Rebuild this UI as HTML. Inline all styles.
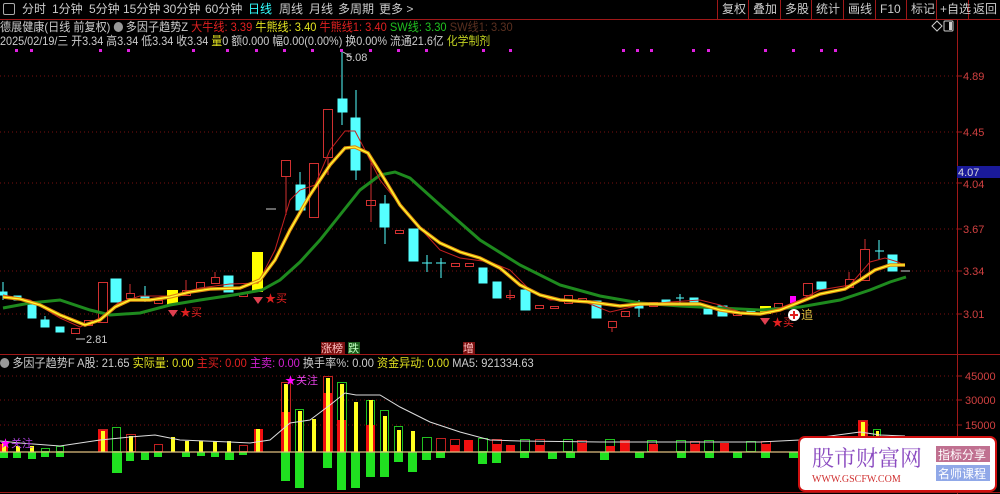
<!DOCTYPE html>
<html><head><meta charset="utf-8"><style>
html,body{margin:0;padding:0;background:#000;width:1000px;height:494px;overflow:hidden;font-family:"Liberation Sans","Noto Sans CJK SC",sans-serif;}
.t{position:absolute;white-space:nowrap;font-size:12px;line-height:14px;}
.sx{transform-origin:0 0;}
.m span{position:absolute;top:0}
</style></head><body>
<div style="position:relative;width:1000px;height:494px;">
<!-- top bar -->
<div class="t" style="left:3px;top:3px;width:10px;height:10px;border:1px solid #aaa;border-radius:2px;"></div>
<div class="t m" style="left:0;top:2px;color:#ccc;"><span style="left:22px">分时</span><span style="left:52px">1分钟</span><span style="left:89px">5分钟</span><span style="left:123px">15分钟</span><span style="left:163px">30分钟</span><span style="left:205px">60分钟</span><span style="left:248px;color:#3ff">日线</span><span style="left:279px">周线</span><span style="left:309px">月线</span><span style="left:338px">多周期</span><span style="left:379px">更多 &gt;</span></div>
<svg width="1000" height="494" style="position:absolute;left:0;top:0" xmlns="http://www.w3.org/2000/svg">
<line x1="0" y1="19.5" x2="1000" y2="19.5" stroke="#a01818"/>
<g stroke="#a01818"><line x1="717.5" y1="0" x2="717.5" y2="19"/><line x1="748.5" y1="0" x2="748.5" y2="19"/><line x1="780.5" y1="0" x2="780.5" y2="19"/><line x1="811.5" y1="0" x2="811.5" y2="19"/><line x1="843.5" y1="0" x2="843.5" y2="19"/><line x1="875.5" y1="0" x2="875.5" y2="19"/><line x1="906.5" y1="0" x2="906.5" y2="19"/><line x1="936.5" y1="0" x2="936.5" y2="19"/><line x1="968.5" y1="0" x2="968.5" y2="19"/>
<line x1="957.5" y1="19" x2="957.5" y2="494"/>
<line x1="0" y1="354.5" x2="1000" y2="354.5"/>
<line x1="0" y1="492.5" x2="1000" y2="492.5"/></g>
<g stroke="#7a1010" stroke-dasharray="1,3">
<line x1="0" y1="76" x2="957" y2="76"/><line x1="0" y1="132" x2="957" y2="132"/><line x1="0" y1="183" x2="957" y2="183"/><line x1="0" y1="229" x2="957" y2="229"/><line x1="0" y1="271" x2="957" y2="271"/><line x1="0" y1="314" x2="957" y2="314"/>
<line x1="0" y1="376" x2="957" y2="376"/><line x1="0" y1="400" x2="957" y2="400"/><line x1="0" y1="425" x2="957" y2="425"/></g>
<g stroke="#a01818"><line x1="957" y1="76" x2="962" y2="76"/><line x1="957" y1="132" x2="962" y2="132"/><line x1="957" y1="183" x2="962" y2="183"/><line x1="957" y1="229" x2="962" y2="229"/><line x1="957" y1="271" x2="962" y2="271"/><line x1="957" y1="314" x2="962" y2="314"/><line x1="957" y1="376" x2="962" y2="376"/><line x1="957" y1="400" x2="962" y2="400"/><line x1="957" y1="425" x2="962" y2="425"/></g>
<!-- magenta dots -->
<g fill="#e020e0">
<rect x="15" y="49" width="3" height="3"/><rect x="30" y="49" width="3" height="3"/><rect x="99" y="49" width="3" height="3"/><rect x="127" y="49" width="3" height="3"/><rect x="192" y="49" width="3" height="3"/><rect x="226" y="49" width="3" height="3"/><rect x="255" y="49" width="3" height="3"/><rect x="283" y="49" width="3" height="3"/><rect x="311" y="49" width="3" height="3"/><rect x="340" y="49" width="3" height="3"/><rect x="369" y="49" width="3" height="3"/><rect x="397" y="49" width="3" height="3"/><rect x="425" y="49" width="3" height="3"/><rect x="482" y="49" width="3" height="3"/><rect x="509" y="49" width="3" height="3"/><rect x="622" y="49" width="3" height="3"/><rect x="636" y="49" width="3" height="3"/><rect x="650" y="49" width="3" height="3"/><rect x="692" y="49" width="3" height="3"/><rect x="707" y="49" width="3" height="3"/><rect x="764" y="49" width="3" height="3"/><rect x="792" y="49" width="3" height="3"/><rect x="820" y="49" width="3" height="3"/><rect x="834" y="49" width="3" height="3"/></g>
<!-- candles: cyan -->
<g fill="#5ff" stroke="#5ff">
<line x1="3" y1="282" x2="3" y2="300"/><rect x="0" y="292" width="7" height="3"/>
<rect x="14" y="296" width="7" height="4"/>
<rect x="28" y="305" width="8" height="13"/><line x1="45" y1="316" x2="45" y2="322"/><rect x="41" y="320" width="8" height="7"/>
<rect x="56" y="327" width="8" height="5"/>
<rect x="111" y="279" width="10" height="23"/><rect x="141" y="296" width="8" height="4"/><line x1="145" y1="286" x2="145" y2="302"/>
<rect x="224" y="276" width="9" height="16"/>
<rect x="296" y="185" width="9" height="25"/><line x1="300" y1="172" x2="300" y2="212"/>
<line x1="342" y1="52" x2="342" y2="125"/><rect x="338" y="99" width="9" height="13"/>
<line x1="356" y1="90" x2="356" y2="180"/><rect x="351" y="118" width="9" height="52"/>
<line x1="385" y1="195" x2="385" y2="244"/><rect x="380" y="204" width="9" height="23"/>
<rect x="409" y="229" width="9" height="32"/>
<line x1="422" y1="263" x2="432" y2="263"/><line x1="427" y1="255" x2="427" y2="272"/>
<line x1="436" y1="263" x2="446" y2="263"/><line x1="441" y1="258" x2="441" y2="278"/>
<rect x="479" y="268" width="8" height="15"/><rect x="493" y="282" width="8" height="16"/>
<rect x="521" y="290" width="9" height="20"/><rect x="592" y="301" width="9" height="17"/>
<rect x="635" y="305" width="8" height="3"/><line x1="639" y1="300" x2="639" y2="317"/>
<rect x="662" y="300" width="8" height="2"/><line x1="676" y1="298" x2="684" y2="298"/><line x1="680" y1="294" x2="680" y2="303"/>
<rect x="690" y="298" width="8" height="5"/><rect x="704" y="308" width="8" height="6"/><rect x="718" y="306" width="9" height="10"/><rect x="747" y="309" width="8" height="4"/>
<rect x="817" y="282" width="9" height="7"/><line x1="875" y1="251" x2="884" y2="251"/><line x1="879" y1="240" x2="879" y2="260"/>
<rect x="888" y="255" width="9" height="16"/></g>
<!-- candles red hollow/solid -->
<g fill="none" stroke="#d03030">
<rect x="71.5" y="328.5" width="8" height="5"/><rect x="84.5" y="320.5" width="8" height="5"/>
<rect x="98.5" y="282.5" width="9" height="40"/><rect x="126.5" y="293.5" width="8" height="5"/><line x1="130" y1="284" x2="130" y2="293"/>
<rect x="154.5" y="300.5" width="8" height="3"/><rect x="182.5" y="290.5" width="8" height="5"/><line x1="186" y1="280" x2="186" y2="290"/>
<rect x="196.5" y="282.5" width="8" height="8"/><rect x="211.5" y="277.5" width="8" height="6"/><line x1="215" y1="272" x2="215" y2="277"/>
<rect x="239.5" y="293.5" width="8" height="3"/>
<rect x="281.5" y="160.5" width="9" height="16"/><line x1="286" y1="176" x2="286" y2="215"/>
<rect x="309.5" y="163.5" width="9" height="54"/>
<rect x="323.5" y="109.5" width="9" height="48"/><line x1="328" y1="157" x2="328" y2="175"/>
<rect x="366.5" y="200.5" width="9" height="5"/><line x1="371" y1="160" x2="371" y2="222"/>
<rect x="395.5" y="230.5" width="8" height="3"/><rect x="451.5" y="263.5" width="8" height="3"/><rect x="465.5" y="263.5" width="8" height="3"/>
<rect x="506.5" y="295.5" width="8" height="2"/><line x1="510" y1="290" x2="510" y2="300"/>
<rect x="535.5" y="305.5" width="8" height="3"/><rect x="550.5" y="306.5" width="8" height="2"/>
<rect x="564.5" y="295.5" width="8" height="8"/><rect x="578.5" y="298.5" width="8" height="4"/>
<rect x="608.5" y="321.5" width="8" height="6"/><line x1="612" y1="327" x2="612" y2="332"/>
<rect x="621.5" y="311.5" width="8" height="5"/><rect x="649.5" y="302.5" width="8" height="4"/>
<rect x="733.5" y="313.5" width="8" height="2"/><rect x="774.5" y="303.5" width="8" height="4"/>
<rect x="803.5" y="283.5" width="9" height="12"/><rect x="845.5" y="279.5" width="8" height="8"/><line x1="849" y1="272" x2="849" y2="279"/>
<rect x="860.5" y="249.5" width="9" height="31"/><line x1="865" y1="239" x2="865" y2="249"/></g>
<g fill="#ffff00"><rect x="167" y="290" width="11" height="15"/><rect x="252" y="252" width="11" height="40"/><rect x="760" y="306" width="11" height="8"/></g>
<rect x="790" y="296" width="6" height="7" fill="#f0f"/>
<line x1="266" y1="209" x2="276" y2="209" stroke="#ccc"/><line x1="901" y1="271" x2="910" y2="271" stroke="#ccc"/>
<!-- lines -->
<polyline fill="none" stroke="#1e8a1e" stroke-width="3" points="3,308 30,303 60,300 90,310 110,315 140,313 170,305 200,300 240,294 262,290 280,280 300,262 320,240 340,215 360,190 380,175 395,172 410,178 440,205 480,240 520,265 560,285 600,296 640,303 680,306 720,308 760,310 800,307 840,300 870,290 890,282 906,277"/>
<polyline fill="none" stroke="#c42020" stroke-width="1" points="3,295 30,300 60,318 80,327 100,318 118,303 140,296 170,296 200,288 230,284 258,283 275,250 290,200 300,190 315,185 330,150 345,131 355,131 365,150 380,180 400,205 420,228 440,250 460,258 490,262 510,270 530,290 550,300 580,300 610,312 640,305 670,302 700,300 720,305 740,312 760,315 780,308 800,300 820,290 850,285 870,262 885,258 898,262 905,266"/>
<polyline fill="none" stroke="#e08a10" stroke-width="3.5" points="3,297 20,299 40,305 60,315 85,325 100,320 115,307 130,300 150,300 170,297 190,292 210,289 240,288 260,280 275,260 290,230 310,195 330,165 345,148 355,147 368,153 385,180 400,205 420,228 440,243 460,252 480,258 500,268 520,285 540,295 560,300 590,302 620,306 640,304 660,304 680,304 700,304 720,310 740,313 760,314 780,310 800,302 820,294 845,289 860,280 875,270 890,265 905,265"/>
<polyline fill="none" stroke="#ffff30" stroke-width="1.3" points="3,297 20,299 40,305 60,315 85,325 100,320 115,307 130,300 150,300 170,297 190,292 210,289 240,288 260,280 275,260 290,230 310,195 330,165 345,148 355,147 368,153 385,180 400,205 420,228 440,243 460,252 480,258 500,268 520,285 540,295 560,300 590,302 620,306 640,304 660,304 680,304 700,304 720,310 740,313 760,314 780,310 800,302 820,294 845,289 860,280 875,270 890,265 905,265"/>
<!-- markers -->
<g fill="#e04050"><path d="M168,310 h10 l-5,7z"/><path d="M253,297 h10 l-5,7z"/><path d="M760,318 h10 l-5,7z"/></g>
<g fill="#e02020" font-size="11"><text x="180" y="316">★买</text><text x="265" y="302">★买</text><text x="772" y="326">★买</text></g>
<circle cx="794" cy="315" r="6" fill="#fff"/><path d="M790,315h8M794,311v8" stroke="#e02020" stroke-width="2"/>
<text x="801" y="319" fill="#e0c040" font-size="12">追</text>
<text x="346" y="61" fill="#ccc" font-size="11">5.08</text><line x1="343" y1="52" x2="352" y2="57" stroke="#ccc"/>
<text x="86" y="343" fill="#ccc" font-size="11">2.81</text><line x1="76" y1="339" x2="85" y2="339" stroke="#ccc"/>
<!-- sub panel -->
<g fill="#20e020"><rect x="0" y="452" width="8" height="6"/><rect x="13" y="452" width="8" height="6"/><rect x="28" y="452" width="8" height="7"/><rect x="41" y="452" width="8" height="5"/><rect x="56" y="452" width="8" height="5"/><rect x="112" y="452" width="10" height="21"/><rect x="126" y="452" width="8" height="9"/><rect x="141" y="452" width="8" height="8"/><rect x="154" y="452" width="8" height="5"/><rect x="182" y="452" width="8" height="5"/><rect x="197" y="452" width="8" height="4"/><rect x="211" y="452" width="8" height="5"/><rect x="225" y="452" width="9" height="8"/><rect x="239" y="452" width="8" height="3"/>
<rect x="281" y="452" width="9" height="29"/><rect x="295" y="452" width="9" height="36"/><rect x="323" y="452" width="9" height="16"/><rect x="337" y="452" width="9" height="38"/><rect x="351" y="452" width="9" height="36"/><rect x="366" y="452" width="9" height="25"/><rect x="380" y="452" width="9" height="25"/><rect x="394" y="452" width="9" height="10"/><rect x="408" y="452" width="9" height="20"/>
<rect x="422" y="452" width="9" height="8"/><rect x="436" y="452" width="9" height="6"/><rect x="478" y="452" width="9" height="12"/><rect x="492" y="452" width="9" height="11"/><rect x="520" y="452" width="9" height="6"/><rect x="548" y="452" width="9" height="7"/><rect x="566" y="452" width="9" height="6"/><rect x="600" y="452" width="9" height="8"/><rect x="635" y="452" width="9" height="6"/><rect x="677" y="452" width="9" height="6"/><rect x="705" y="452" width="9" height="6"/><rect x="733" y="452" width="9" height="6"/><rect x="761" y="452" width="9" height="6"/><rect x="789" y="452" width="9" height="6"/></g>
<g stroke="#20c020" fill="none"><rect x="112.5" y="427.5" width="8" height="24"/><rect x="41.5" y="448.5" width="8" height="3"/><rect x="56.5" y="446.5" width="7" height="5"/><rect x="295.5" y="409.5" width="8" height="42"/><rect x="337.5" y="382.5" width="9" height="69"/><rect x="366.5" y="400.5" width="8" height="51"/><rect x="380.5" y="410.5" width="8" height="41"/><rect x="394.5" y="426.5" width="8" height="25"/><rect x="422.5" y="437.5" width="9" height="14"/><rect x="436.5" y="438.5" width="9" height="13"/><rect x="478.5" y="438.5" width="9" height="13"/><rect x="520.5" y="439.5" width="9" height="12"/><rect x="563.5" y="439.5" width="9" height="12"/><rect x="605.5" y="439.5" width="9" height="12"/><rect x="647.5" y="440.5" width="9" height="11"/><rect x="676.5" y="440.5" width="9" height="11"/><rect x="704.5" y="440.5" width="9" height="11"/><rect x="746.5" y="441.5" width="9" height="10"/><rect x="873.5" y="429.5" width="7" height="22"/></g>
<g stroke="#c02020" fill="none"><rect x="98.5" y="429.5" width="9" height="22"/><rect x="126.5" y="434.5" width="9" height="17"/><rect x="154.5" y="444.5" width="8" height="7"/><rect x="239.5" y="445.5" width="8" height="6"/><rect x="281.5" y="382.5" width="9" height="69"/><rect x="323.5" y="376.5" width="9" height="75"/><rect x="436.5" y="438.5" width="9" height="13"/><rect x="450.5" y="439.5" width="9" height="12"/><rect x="492.5" y="439.5" width="9" height="12"/><rect x="535.5" y="439.5" width="9" height="12"/><rect x="577.5" y="440.5" width="9" height="11"/><rect x="620.5" y="440.5" width="9" height="11"/><rect x="690.5" y="441.5" width="9" height="10"/><rect x="761.5" y="441.5" width="9" height="10"/><rect x="858.5" y="420.5" width="9" height="31"/></g>
<g fill="#f01010"><rect x="0" y="444" width="8" height="8"/><rect x="98" y="430" width="9" height="22"/><rect x="254" y="429" width="9" height="23"/><rect x="281" y="412" width="9" height="40"/><rect x="323" y="393" width="9" height="59"/><rect x="337" y="420" width="9" height="32"/><rect x="366" y="425" width="9" height="27"/><rect x="450" y="445" width="9" height="7"/><rect x="464" y="440" width="9" height="12"/><rect x="492" y="444" width="9" height="8"/><rect x="506" y="445" width="9" height="7"/><rect x="535" y="445" width="9" height="7"/><rect x="578" y="443" width="9" height="9"/><rect x="606" y="446" width="9" height="6"/><rect x="620" y="441" width="9" height="11"/><rect x="649" y="444" width="9" height="8"/><rect x="691" y="444" width="9" height="8"/><rect x="720" y="443" width="9" height="9"/><rect x="762" y="444" width="9" height="8"/><rect x="858" y="421" width="9" height="31"/></g>
<g fill="#ffff20"><rect x="2" y="443" width="4" height="9"/><rect x="16" y="446" width="4" height="6"/><rect x="30" y="446" width="4" height="6"/><rect x="101" y="431" width="4" height="21"/><rect x="129" y="436" width="4" height="16"/><rect x="171" y="437" width="4" height="15"/><rect x="185" y="441" width="4" height="11"/><rect x="199" y="441" width="4" height="11"/><rect x="213" y="441" width="4" height="11"/><rect x="227" y="441" width="4" height="11"/><rect x="256" y="429" width="4" height="23"/><rect x="284" y="384" width="4" height="68"/><rect x="298" y="411" width="4" height="41"/><rect x="312" y="419" width="4" height="33"/><rect x="326" y="378" width="4" height="74"/><rect x="340" y="384" width="4" height="68"/><rect x="354" y="402" width="4" height="50"/><rect x="369" y="400" width="4" height="52"/><rect x="383" y="416" width="4" height="36"/><rect x="397" y="430" width="4" height="22"/><rect x="411" y="431" width="4" height="21"/><rect x="861" y="422" width="4" height="30"/><rect x="876" y="431" width="3" height="21"/></g>
<line x1="0" y1="452" x2="957" y2="452" stroke="#e0c080" stroke-width="1.2"/>
<polyline fill="none" stroke="#ddd" points="0,441 20,443 60,446 100,440 130,437 155,435 180,440 230,442 250,443 270,440 290,423 310,420 330,405 345,393 356,395 380,395 400,407 430,422 460,432 490,440 520,441 600,442 700,442 760,442 800,440 860,432 880,435 905,436"/>
<text x="0" y="447" fill="#f0f" font-size="11">★<tspan fill="#b040e0">关注</tspan></text>
<text x="285" y="384" fill="#f0f" font-size="11">★<tspan fill="#e040e0">关注</tspan></text>
<!-- axis labels -->
<g fill="#d04040" font-size="11"><text x="963" y="80">4.89</text><text x="963" y="136">4.45</text><text x="963" y="188">4.04</text><text x="963" y="233">3.67</text><text x="963" y="275">3.34</text><text x="963" y="318">3.01</text>
<text x="965" y="380">45000</text><text x="965" y="404">30000</text><text x="965" y="429">15000</text></g>
<rect x="957" y="166" width="43" height="12" fill="#1a1a9a"/><text x="958" y="176" fill="#ddd" font-size="11">4.07</text>
<path d="M932,26 l5,-5 l5,5 l-5,5z" fill="none" stroke="#ccc"/><rect x="944" y="21" width="9" height="10" fill="none" stroke="#ccc" rx="1"/><rect x="949" y="22" width="3" height="8" fill="#ccc"/>
<!-- tags -->
<rect x="321" y="342" width="24" height="12" fill="#7a1010"/><rect x="348" y="342" width="12" height="12" fill="#1a5a1a"/><rect x="463" y="342" width="12" height="12" fill="#7a1010"/>
<text x="321" y="352" fill="#ffc0c0" font-size="11">涨榜</text><text x="348" y="352" fill="#c0ffc0" font-size="11">跌</text><text x="463" y="352" fill="#ffc0c0" font-size="11">增</text>
<!-- watermark -->
<rect x="799" y="437" width="197" height="54" rx="6" fill="#fff" stroke="#d01010" stroke-width="2"/>
<text x="812" y="466" fill="#8a4ac0" font-size="22" font-family="Noto Serif CJK SC,serif">股市财富网</text>
<text x="812" y="482" fill="#d03030" font-size="10" font-family="Liberation Serif,serif">WWW.GSCFW.COM</text>
<rect x="936" y="446" width="54" height="16" fill="#c07090"/><text x="938" y="459" fill="#fff" font-size="12">指标分享</text>
<rect x="936" y="465" width="54" height="16" fill="#90a8e8"/><text x="938" y="478" fill="#fff" font-size="12">名师课程</text>
</svg>
<div class="t m" style="left:722px;top:2px;color:#ccc;"><span style="left:0">复权</span><span style="left:31px">叠加</span><span style="left:63px">多股</span><span style="left:94px">统计</span><span style="left:126px">画线</span><span style="left:158px">F10</span><span style="left:189px">标记</span><span style="left:218px">+自选</span><span style="left:251px">返回</span></div>
<div class="t sx" style="left:0;top:20px;color:#ccc;transform:scaleX(0.925)">德展健康(日线 前复权) <span style="display:inline-block;width:10px;height:10px;border-radius:5px;background:#999;vertical-align:-1px"></span> 多因子趋势Z <span style="color:#e02020">大牛线: 3.39</span> <span style="color:#e0e020">牛熊线: 3.40</span> <span style="color:#e02020">牛熊线1: 3.40</span> <span style="color:#20c020">SW线: 3.30</span> <span style="color:#5a3020">SW线1: 3.30</span></div>
<div class="t sx" style="left:0;top:34px;color:#ccc;transform:scaleX(0.905)">2025/02/19/三 开3.34 高3.34 低3.34 收3.34 <span style="color:#e0e020">量</span>0 额0.000 幅0.00(0.00%) 换0.00% 流通21.6亿 <span style="color:#c0d020">化学制剂</span></div>
<div class="t sx" style="left:0;top:356px;color:#ccc;transform:scaleX(0.925)"><span style="display:inline-block;width:10px;height:10px;border-radius:5px;background:#999;vertical-align:-1px"></span> 多因子趋势F A股: 21.65 <span style="color:#e0e020">实际量: 0.00</span> <span style="color:#e02020">主买: 0.00</span> <span style="color:#d020d0">主卖: 0.00</span> 换手率%: 0.00 <span style="color:#e0e020">资金异动: 0.00</span> MA5: 921334.63</div>
</div>
</body></html>
